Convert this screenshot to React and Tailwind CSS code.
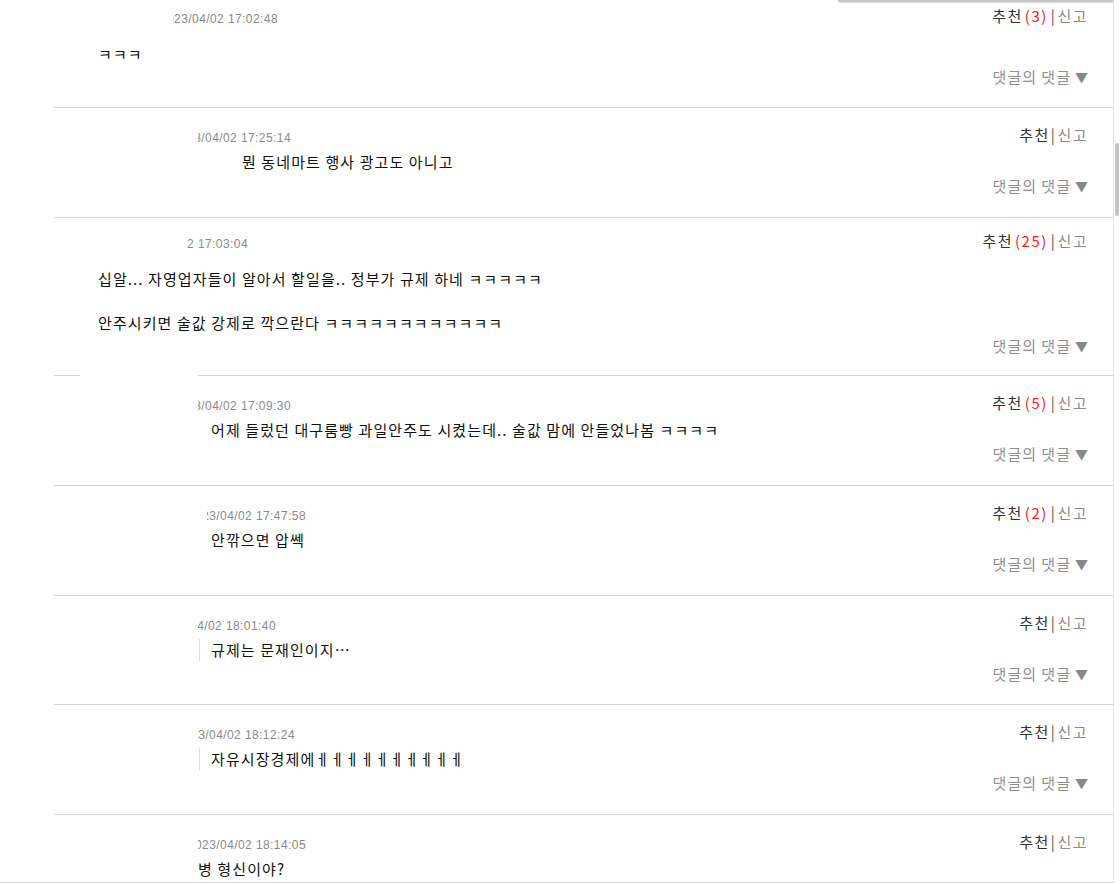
import React from 'react';

const KR = { fontFamily: '"Noto Sans CJK KR", "Noto Sans", sans-serif' };

const comments = [
  {
    top: true, first: true, pb: 'pb-[20px]',
    date: '2023/04/02 17:02:48', dateCls: 'ml-[119px] w-[105px]',
    textCls: 'ml-[44px]', lines: ['ㅋㅋㅋ'], rec: 3,
  },
  {
    date: '2023/04/02 17:25:14', dateCls: 'ml-[144px] w-[93px]',
    textCls: 'ml-[188px]', lines: ['뭔 동네마트 행사 광고도 아니고'],
  },
  {
    top: true, pb: 'pb-[19px]',
    date: '2023/04/02 17:03:04', dateCls: 'ml-[133px] w-[61px]',
    textCls: 'ml-[44px]',
    lines: ['십알... 자영업자들이 알아서 할일을.. 정부가 규제 하네 ㅋㅋㅋㅋㅋ', '', '안주시키면 술값 강제로 깍으란다 ㅋㅋㅋㅋㅋㅋㅋㅋㅋㅋㅋㅋ'],
    rec: 25,
  },
  {
    gap: true,
    date: '2023/04/02 17:09:30', dateCls: 'ml-[144px] w-[93px]',
    textCls: 'ml-[157px]', lines: ['어제 들렀던 대구룸빵 과일안주도 시켰는데.. 술값 맘에 안들었나봄 ㅋㅋㅋㅋ'], rec: 5,
  },
  {
    date: '2023/04/02 17:47:58', dateCls: 'ml-[153px] w-[99px]',
    textCls: 'ml-[157px]', lines: ['안깎으면 압쎅'], rec: 2,
  },
  {
    short: true,
    date: '2023/04/02 18:01:40', dateCls: 'ml-[144px] w-[78px]',
    textCls: 'ml-[145px] border-l border-[#dddddd] pl-[11px]', lines: ['규제는 문재인이지…'],
  },
  {
    date: '2023/04/02 18:12:24', dateCls: 'ml-[144px] w-[97px]',
    textCls: 'ml-[145px] border-l border-[#dddddd] pl-[11px]', lines: ['자유시장경제에ㅔㅔㅔㅔㅔㅔㅔㅔㅔㅔ'],
  },
  {
    last: true,
    date: '2023/04/02 18:14:05', dateCls: 'ml-[144px] w-[108px]',
    textCls: 'ml-[144px]', lines: ['병 형신이야?'],
  },
];

function Actions({ rec }) {
  return (
    <div className="h-[20px] text-[15px] leading-[20px] tracking-[1.5px] whitespace-nowrap" style={KR}>
      <span className="text-[#333333]">추천</span>
      {rec ? <span className="px-[2px] text-[#ff2020]">({rec})</span> : null}
      <span className="mx-[1px] text-[#555555]">|</span>
      <span className="text-[#8c8c8c]">신고</span>
    </div>
  );
}

function Comment({ c }) {
  let footer = 'mt-[3px] pb-[21px]';
  if (c.top) footer = 'mt-[2px] ' + c.pb;
  else if (c.short) footer = 'mt-[3px] pb-[20px]';
  return (
    <div
      className={
        'relative ml-[54px] flex flex-col pr-[25px] ' +
        (c.first ? 'mt-[-7px] ' : 'border-t border-[#d2d2d2] ') +
        (c.top ? 'pt-[13px]' : 'pt-[17px]')
      }
    >
      {c.gap && (
        <div className="absolute left-[26px] top-[-1px] h-px w-[118px] bg-white" />
      )}
      <div className="flex h-[21px] items-start justify-between">
        <div className={'mt-[5px] flex justify-end overflow-hidden ' + c.dateCls}>
          <span
            className="whitespace-nowrap text-[12px] leading-[16px] tracking-[0.42px] text-[#8a8a8a]"
            style={{ fontFamily: '"Liberation Sans", Arial, sans-serif' }}
          >
            {c.date}
          </span>
        </div>
        <Actions rec={c.rec} />
      </div>
      <div
        className={(c.top ? 'mt-[16px] ' : 'mt-[5px] ') + 'text-[15px] leading-[22px] tracking-[1.1px] text-[#111111] ' + c.textCls}
        style={KR}
      >
        {c.lines.map((l, i) => (
          <div key={i} className="h-[22px] whitespace-nowrap">{l}</div>
        ))}
      </div>
      {!c.last && (
        <div className={'flex h-[20px] justify-end ' + footer} style={{ boxSizing: 'content-box' }}>
          <span className="flex h-[20px] items-center text-[15px] leading-[20px] tracking-[1px] text-[#8f8f8f]" style={KR}>
            댓글의 댓글
            <span className="ml-[4px] text-[13px] leading-[20px] tracking-normal text-[#888888]">▼</span>
          </span>
        </div>
      )}
    </div>
  );
}

export default function App() {
  return (
    <div className="relative h-[884px] w-[1120px] overflow-hidden bg-white">
      <div className="absolute left-[838px] top-0 h-[3px] w-[275px] rounded-bl-[3px] bg-gradient-to-b from-[#bdbdbd] to-[#dedede]" />
      <div className="absolute right-[1px] top-[143px] h-[73px] w-[4px] rounded-full bg-[#c4c4c4]" />
      <div className="h-[883px] w-[1114px] overflow-hidden border-r border-b border-[#e2e2e2]">
        {comments.map((c, i) => (
          <Comment key={i} c={c} />
        ))}
      </div>
    </div>
  );
}
